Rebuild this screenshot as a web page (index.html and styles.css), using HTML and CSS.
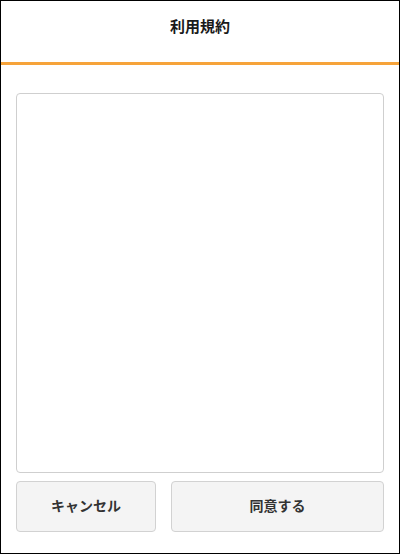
FILE: index.html
```html
<!DOCTYPE html>
<html lang="ja">
<head>
<meta charset="utf-8">
<link rel="stylesheet" href="styles.css">
</head>
<body>
<div class="frame">
  <header class="header">
    <h1 class="title">利用規約</h1>
  </header>
  <main class="content">
    <div class="terms"></div>
    <div class="actions">
      <button class="btn btn-cancel">キャンセル</button>
      <button class="btn btn-agree">同意する</button>
    </div>
  </main>
</div>
</body>
</html>
```
FILE: styles.css
```css
html, body {
  margin: 0;
  padding: 0;
}
body {
  font-family: "Noto Sans CJK JP", "Noto Sans", sans-serif;
  background: #fff;
}
.frame {
  box-sizing: border-box;
  width: 400px;
  height: 554px;
  border: 1px solid #000;
  display: flex;
  flex-direction: column;
}
.header {
  border-bottom: 3px solid #f6a33a;
  display: flex;
  justify-content: center;
  padding-top: 14px;
  box-sizing: content-box;
  height: 47px;
}
.title {
  margin: 0;
  font-size: 15px;
  font-weight: bold;
  color: #1a1a1a;
  line-height: 22px;
}
.content {
  flex: 1;
  display: flex;
  flex-direction: column;
  padding: 28px 15px 21px 15px;
  gap: 8px;
}
.terms {
  height: 378px;
  border: 1px solid #cfcfcf;
  border-radius: 4px;
  background: #fff;
}
.actions {
  display: flex;
  gap: 15px;
  height: 51px;
}
.btn {
  box-sizing: border-box;
  height: 51px;
  border: 1px solid #d2d2d2;
  border-radius: 4px;
  background: #f4f4f4;
  font-family: "Noto Sans CJK JP", "Noto Sans", sans-serif;
  font-size: 14px;
  font-weight: bold;
  color: #333;
  padding: 0 0 3px 0;
}
.btn-cancel {
  width: 140px;
}
.btn-agree {
  flex: 1;
}
```
